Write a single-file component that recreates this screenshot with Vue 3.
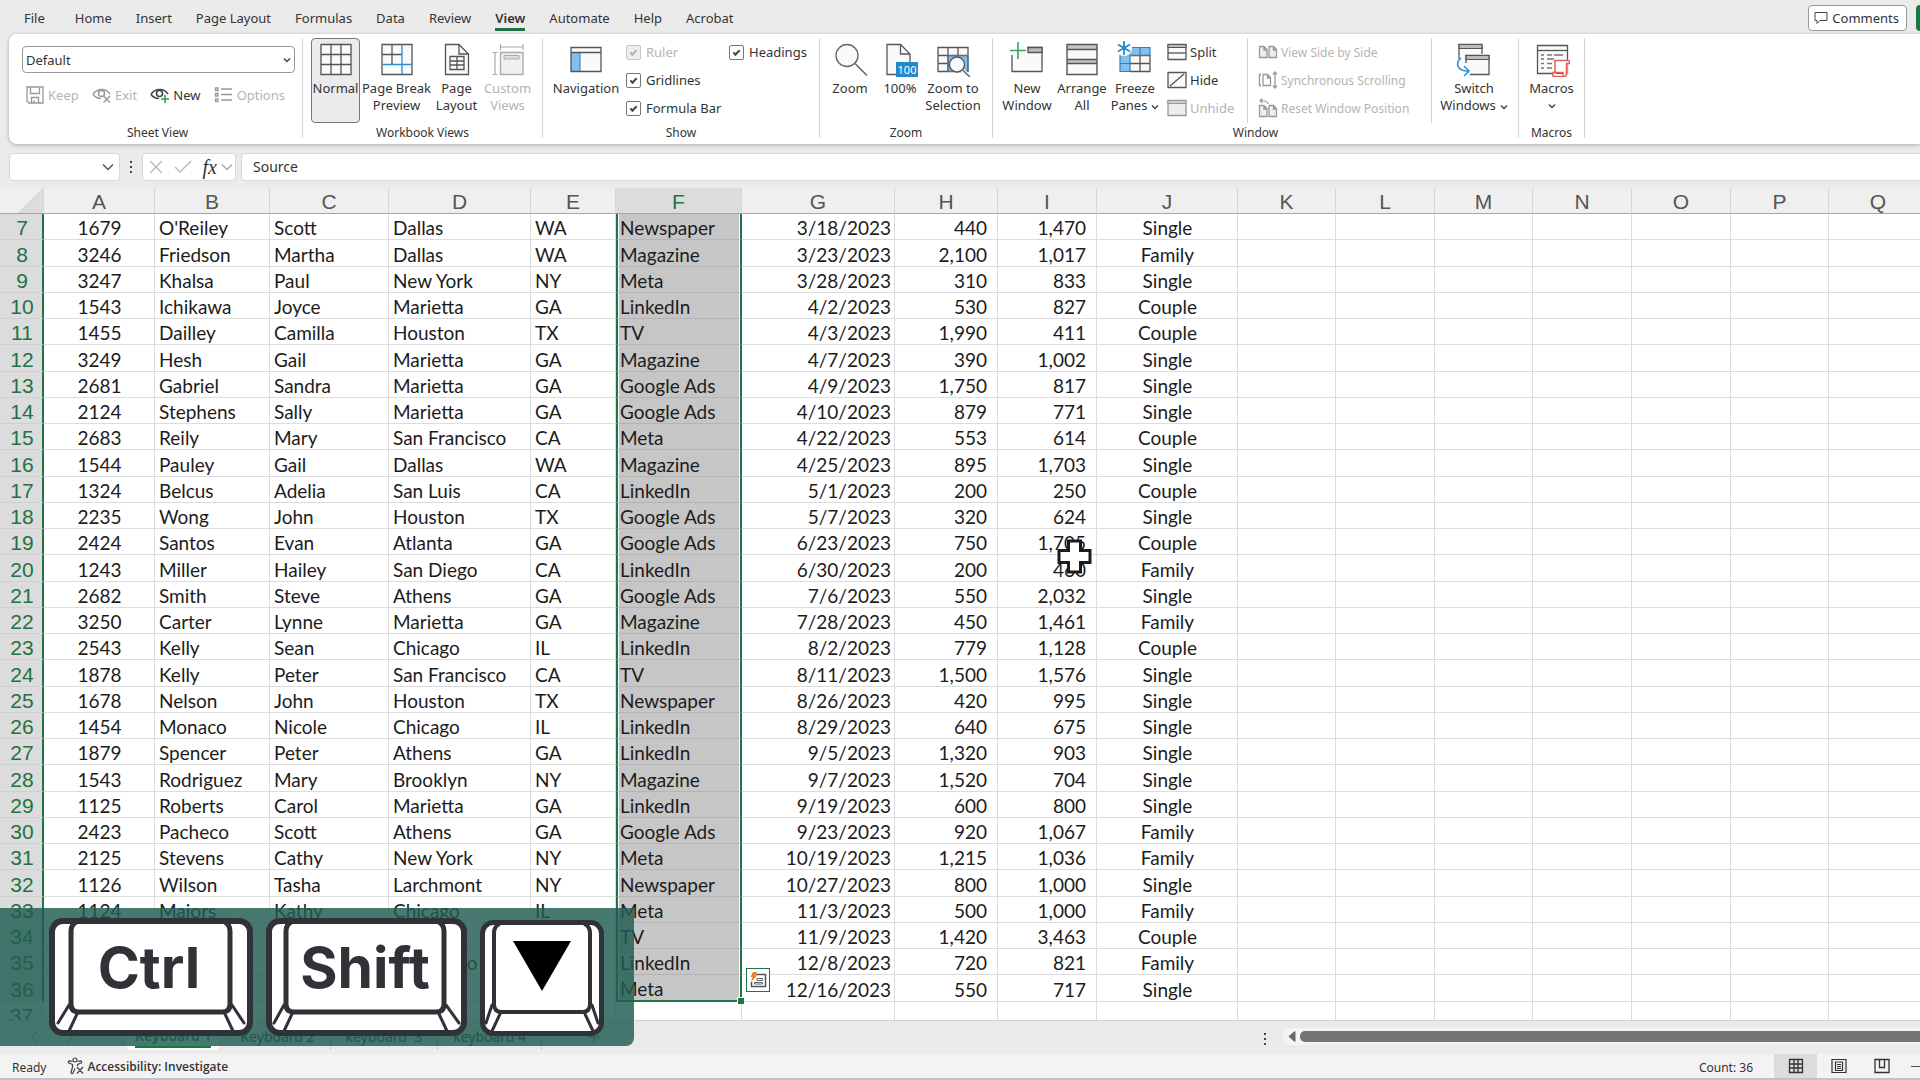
<template>
  <div class="excel">
    <nav class="menu">
      <button v-for="m in menus" :key="m" class="menu-item" :class="{ active: m === 'View' }">{{ m }}</button>
      <button class="comments">
        <svg width="14" height="14" viewBox="0 0 14 14"><path d="M1 1.500H13V9.500H6L3 12.500V9.500H1Z" fill="none" stroke="#444" /></svg>
        Comments
      </button>
      <button class="share" aria-label="Share"></button>
    </nav>

    <div class="ribbon">
      <section class="group sheet-view">
        <div class="body">
          <div class="view-select">
            <select aria-label="Sheet view"><option>Default</option></select>
            <svg class="chev" viewBox="0 0 8 6"><path :d="chevron" /></svg>
          </div>
          <div class="view-actions">
            <button v-for="a in viewActions" :key="a.label" class="small-btn" :disabled="a.off">
              <svg width="20" height="20" viewBox="0 0 20 20" v-html="icons[a.icon]" />{{ a.label }}
            </button>
          </div>
        </div>
        <h2>Sheet View</h2>
      </section>

      <section class="group workbook">
        <div class="body">
          <button v-for="b in workbookViews" :key="b.icon" class="big-btn" :class="[b.icon, { on: b.on }]" :disabled="b.off">
            <svg width="36" height="36" viewBox="0 0 36 36" v-html="icons[b.icon]" />
            <span v-for="l in b.lines" :key="l">{{ l }}</span>
          </button>
        </div>
        <h2>Workbook Views</h2>
      </section>

      <section class="group show">
        <div class="body">
          <button class="big-btn navigation">
            <svg width="36" height="36" viewBox="0 0 36 36" v-html="icons.navigation" />
            <span>Navigation</span>
          </button>
          <div class="checks">
            <label v-for="c in checks" :key="c.label" :class="{ off: c.off }">
              <input type="checkbox" checked :disabled="c.off" />{{ c.label }}
            </label>
          </div>
        </div>
        <h2>Show</h2>
      </section>

      <section class="group zoom-group">
        <div class="body">
          <button v-for="b in zooms" :key="b.icon" class="big-btn" :class="b.icon">
            <svg width="36" height="36" viewBox="0 0 36 36" v-html="icons[b.icon]" />
            <span v-for="l in b.lines" :key="l">{{ l }}</span>
          </button>
        </div>
        <h2>Zoom</h2>
      </section>

      <section class="group window-group">
        <div class="body">
          <button v-for="b in windows" :key="b.icon" class="big-btn" :class="b.icon">
            <svg width="36" height="36" viewBox="0 0 36 36" v-html="icons[b.icon]" />
            <span v-for="l in b.lines" :key="l">{{ l }}<svg v-if="l === 'Panes'" class="chev" viewBox="0 0 8 6"><path :d="chevron" /></svg></span>
          </button>
          <div class="stack first">
            <button v-for="s in windowSmall" :key="s.label" class="small-btn" :disabled="s.off">
              <svg width="20" height="20" viewBox="0 0 20 20" v-html="icons[s.icon]" />{{ s.label }}
            </button>
          </div>
          <div class="stack second">
            <button v-for="s in sideBySide" :key="s.label" class="small-btn" disabled>
              <svg width="20" height="20" viewBox="0 0 20 20" v-html="icons[s.icon]" />{{ s.label }}
            </button>
          </div>
          <button class="big-btn switch">
            <svg width="36" height="36" viewBox="0 0 36 36" v-html="icons.switch" />
            <span>Switch</span>
            <span>Windows<svg class="chev" viewBox="0 0 8 6"><path :d="chevron" /></svg></span>
          </button>
        </div>
        <h2>Window</h2>
      </section>

      <section class="group macros-group">
        <div class="body">
          <button class="big-btn macros">
            <svg width="36" height="36" viewBox="0 0 36 36" v-html="icons.macros" />
            <span>Macros</span>
            <svg class="chev" viewBox="0 0 8 6"><path :d="chevron" /></svg>
          </button>
        </div>
        <h2>Macros</h2>
      </section>
    </div>

    <div class="formula">
      <div class="name-box">
        <input type="text" aria-label="Name box" />
        <svg width="12" height="8" viewBox="0 0 12 8"><path d="M1 1.500L6 6.500L11 1.500" fill="none" stroke="#555" stroke-width="1.500" /></svg>
      </div>
      <svg class="dots" width="4" height="14" viewBox="0 0 4 14"><path d="M1 1h2v2h-2zM1 6h2v2h-2zM1 11h2v2h-2z" fill="#444" /></svg>
      <div class="fx">
        <button aria-label="Cancel"><svg width="16" height="16" viewBox="0 0 16 16"><path d="M2 2L14 14M14 2L2 14" fill="none" stroke="#bbb" stroke-width="1.500" /></svg></button>
        <button aria-label="Enter"><svg width="20" height="16" viewBox="0 0 20 16"><path d="M2 8L7 13L18 2" fill="none" stroke="#bbb" stroke-width="1.500" /></svg></button>
        <button class="fx-btn" aria-label="Insert function"><i>fx</i><svg width="12" height="8" viewBox="0 0 12 8"><path d="M1 1.500L6 6.500L11 1.500" fill="none" stroke="#aaa" stroke-width="1.500" /></svg></button>
      </div>
      <input class="formula-input" type="text" value="Source" aria-label="Formula bar" />
    </div>

    <main class="grid">
      <table :style="{ width: tableWidth + 'px' }">
        <colgroup>
          <col v-for="(w, i) in widths" :key="i" :style="{ width: w + 'px' }" />
        </colgroup>
        <thead>
          <tr>
            <th class="corner"></th>
            <th v-for="c in columns" :key="c" :class="{ sel: c === 'F' }">{{ c }}</th>
          </tr>
        </thead>
        <tbody>
          <tr v-for="(r, i) in rows" :key="i">
            <th :class="{ sel: i < 30 }">{{ i + 7 }}</th>
            <td v-for="(c, j) in columns" :key="c" :class="['c' + c, { sel: c === 'F' && i < 30, last: i === 29 }]">{{ r[j] }}</td>
          </tr>
        </tbody>
      </table>
      <button class="quick" aria-label="Quick analysis">
        <svg width="18" height="18" viewBox="0 0 18 18">
          <path d="M7 3.500H16.500V15.500H2.500V11" fill="none" stroke="#555" stroke-width="1.500" />
          <path d="M8 7.500H13.500V9.500H8ZM5.500 11.500H13.500V13H5.500Z" fill="#fff" stroke="#666" />
          <path d="M4 1H8L6 4.500H8L2 11L3.500 6H1.500Z" fill="#ed7d24" />
        </svg>
      </button>
      <svg class="cursor" width="36" height="36" viewBox="0 0 36 36">
        <path d="M13 4H25V13H34V25H25V34H13V25H4V13H13Z" fill="#0003" />
        <path d="M11.500 2H23.500V11.500H33V23.500H23.500V33H11.500V23.500H2V11.500H11.500Z" fill="#fff" stroke="#1c1c1c" stroke-width="3" />
      </svg>
    </main>

    <footer class="tabs">
      <button class="arrow" aria-label="Previous sheet"><svg width="8" height="12" viewBox="0 0 8 12"><path d="M6.500 1L1.500 6L6.500 11" fill="none" stroke="#777" /></svg></button>
      <button class="arrow" aria-label="Next sheet"><svg width="8" height="12" viewBox="0 0 8 12"><path d="M1.500 1L6.500 6L1.500 11" fill="none" stroke="#777" /></svg></button>
      <button v-for="(s, i) in sheets" :key="s" class="tab" :class="{ active: i === 0 }"><span>{{ s }}</span></button>
      <button class="add" aria-label="New sheet"><svg width="14" height="14" viewBox="0 0 14 14"><path d="M7 1V13M1 7H13" stroke="#555" /></svg></button>
      <svg class="dots" width="4" height="14" viewBox="0 0 4 14"><path d="M1 1h2v2h-2zM1 6h2v2h-2zM1 11h2v2h-2z" fill="#444" /></svg>
      <div class="scroll">
        <svg width="8" height="11" viewBox="0 0 8 11"><path d="M7.500 0V11L5 9.500L.5 5.500L5 1.500Z" fill="#666" /></svg>
        <div class="thumb"></div>
      </div>
    </footer>

    <div class="status">
      <span class="ready">Ready</span>
      <button class="access">
        <svg width="18" height="18" viewBox="0 0 18 18">
          <g fill="none" stroke="#444" stroke-width="1.200" stroke-linejoin="round">
            <circle cx="8" cy="3" r="2" />
            <path d="M5.500 4.500L2.500 3.800C1 3.800 1 5.500 2 6L5.500 7.500V10L4 15.500C4.200 17 5.700 17 6 16L8 11.500M10.500 4.500L13.500 3.800C15 3.800 15 5.500 14 6L10.500 7.500V9M10 10L16 16.500M16 10L10 16.500" />
          </g>
        </svg>
        Accessibility: Investigate
      </button>
      <span class="count">Count: 36</span>
      <button class="mode on" aria-label="Normal view"><svg width="16" height="16" viewBox="0 0 16 16"><path d="M1.500 1.500H14.500V14.500H1.500ZM6 1.500V14.500M10 1.500V14.500M1.500 6H14.500M1.500 10H14.500" fill="none" stroke="#333" stroke-width="1.300" /></svg></button>
      <button class="mode" aria-label="Page layout view"><svg width="16" height="16" viewBox="0 0 16 16"><path d="M1 1.500H15V14.500H1ZM4.500 4H11.500V12.500H4.500ZM6 6.500H10M6 8.500H10M6 10.500H10" fill="none" stroke="#333" stroke-width="1.200" /></svg></button>
      <button class="mode" aria-label="Page break view"><svg width="16" height="16" viewBox="0 0 16 16"><path d="M1 1.500H15V14.500H1ZM5.500 1.500V9.500H10.500V1.500" fill="none" stroke="#333" stroke-width="1.300" /></svg></button>
      <button class="minus" aria-label="Zoom out"></button>
    </div>

    <div class="keys">
      <svg v-for="k in keys" :key="k.id" :width="k.w" height="118" :viewBox="`0 0 ${k.w} 118`">
        <rect :x="k.s / 2" :y="k.top + k.s / 2" :width="k.w - k.s" :height="118 - k.top - k.s" rx="11" fill="#fff" stroke="#303238" :stroke-width="k.s" />
        <g fill="none" stroke="#303238" stroke-linecap="round">
          <path :d="`M${k.l + 5} ${k.top + 4}Q${k.l} ${k.top + 7} ${k.l} ${k.top + 13}V86Q${k.l} 94 ${k.l + 8} 94H${k.r - 8}Q${k.r} 94 ${k.r} 86V${k.top + 13}Q${k.r} ${k.top + 7} ${k.r - 5} ${k.top + 4}`" :stroke-width="k.s - 1" />
          <path :d="`M${k.l - 2} 87L${k.d} 105M${k.l + 6} 96L${k.l - 2} 113M${k.r + 2} 87L${k.w - k.d} 105M${k.r - 5} 96L${k.r + 3} 113`" stroke-width="3" />
        </g>
        <text v-if="k.text" :x="k.cx" y="70" text-anchor="middle">{{ k.text }}</text>
        <path v-else d="M33 23H91L62 73Z" fill="#000" />
      </svg>
    </div>
  </div>
</template>

<script setup>
const menus = ['File', 'Home', 'Insert', 'Page Layout', 'Formulas', 'Data', 'Review', 'View', 'Automate', 'Help', 'Acrobat']

const viewActions = [
  { label: 'Keep', icon: 'save', off: true },
  { label: 'Exit', icon: 'exit', off: true },
  { label: 'New', icon: 'eye' },
  { label: 'Options', icon: 'options', off: true },
]

const workbookViews = [
  { icon: 'normal', lines: ['Normal'], on: true },
  { icon: 'pagebreak', lines: ['Page Break', 'Preview'] },
  { icon: 'pagelayout', lines: ['Page', 'Layout'] },
  { icon: 'custom', lines: ['Custom', 'Views'], off: true },
]

const checks = [
  { label: 'Ruler', off: true },
  { label: 'Headings' },
  { label: 'Gridlines' },
  { label: 'Formula Bar' },
]

const zooms = [
  { icon: 'zoom', lines: ['Zoom'] },
  { icon: 'hundred', lines: ['100%'] },
  { icon: 'zoomsel', lines: ['Zoom to', 'Selection'] },
]

const windows = [
  { icon: 'newwin', lines: ['New', 'Window'] },
  { icon: 'arrange', lines: ['Arrange', 'All'] },
  { icon: 'freeze', lines: ['Freeze', 'Panes'] },
]

const windowSmall = [
  { label: 'Split', icon: 'split' },
  { label: 'Hide', icon: 'hide' },
  { label: 'Unhide', icon: 'unhide', off: true },
]

const sideBySide = [
  { label: 'View Side by Side', icon: 'side' },
  { label: 'Synchronous Scrolling', icon: 'sync' },
  { label: 'Reset Window Position', icon: 'reset' },
]

const sheets = ['Keyboard 1', 'Keyboard 2', 'keyboard  3', 'keyboard 4']

const keys = [
  { id: 'ctrl', text: 'Ctrl', w: 204, s: 6, top: 0, l: 22, r: 181, d: 9, cx: 100 },
  { id: 'shift', text: 'Shift', w: 201, s: 6, top: 0, l: 20, r: 178, d: 8, cx: 99 },
  { id: 'down', text: '', w: 124, s: 5, top: 2, l: 14, r: 110, d: 6, cx: 62 },
]

const chevron = 'M1 1.500L4 4.500L7 1.500'

const icons = {
  save: '<g fill="none" stroke="#999" stroke-width="1.300"><path d="M2 2H18V18H4L2 16ZM5.500 2V8.500H14.500V2M6.500 18V12.500H13.500V18M9 15V18"/></g>',
  exit: '<g fill="none" stroke="#999" stroke-width="1.500"><path d="M1 9.500C5 3 14 3 18 9M1 9.500C3 12 6 13.500 9 13.500"/><circle cx="9.500" cy="8.500" r="3"/><path d="M11.500 11L18 17.500M18 11L11.500 17.500"/></g>',
  eye: '<g fill="none" stroke="#444" stroke-width="1.600"><path d="M1 9.500C5 3 14 3 18 9M1 9.500C3 12 6 13.500 9 13.500"/><circle cx="9.500" cy="8.500" r="3"/><path d="M15 10V18M11 14H19" stroke="#2e9e4f"/></g>',
  options: '<g fill="none" stroke="#999" stroke-width="1.300"><path d="M7 4H18M7 9.500H18M7 15H18"/><path d="M1.500 3H4V5.500H1.500ZM1.500 8.500H4V11H1.500ZM1.500 14H4V16.500H1.500Z"/></g>',
  normal: '<path d="M3 3.500H33V33.500H3ZM13 3.500V33.500M23 3.500V33.500M3 13.500H33M3 23.500H33" fill="#fafafa" stroke="#555" stroke-width="1.300"/>',
  pagebreak: '<path d="M3 3.500H33V33.500H3ZM13 3.500V23.500M3 13.500H23" fill="#fafafa" stroke="#555" stroke-width="1.300"/><path d="M23 4V33M3.500 23.500H32.500" stroke="#2b8fd0" stroke-width="1.300"/>',
  pagelayout: '<path d="M6.500 3.500H20L29.500 13V33.500H6.500Z" fill="#fafafa" stroke="#555" stroke-width="1.300"/><path d="M20 3.500V13H29.500M11 15.500H25V28.500H11ZM11 20H25M11 24H25M18 15.500V28.500" fill="none" stroke="#555" stroke-width="1.300"/>',
  custom: '<path d="M10.500 11.500H33V33.500H10.500Z" fill="#f0f0f0" stroke="#aaa" stroke-width="1.300"/><path d="M14 14.500H29V18H14Z" fill="#ddd" stroke="#aaa"/><path d="M10.500 6H33M10.500 3V9M33 3V9M5 11.500V33.500M2.500 11.500H7.500M2.500 33.500H7.500" stroke="#aaa" stroke-width="1.200"/>',
  navigation: '<path d="M3 6.500H33V30.500H3Z" fill="#fafafa"/><path d="M3 11.500H12V30.500H3Z" fill="#83beec"/><path d="M12 11.500V30.500" stroke="#2b7fc4"/><path d="M3 6.500H33V30.500H3ZM3 11.500H33" fill="none" stroke="#555" stroke-width="1.300"/>',
  zoom: '<circle cx="15" cy="14.500" r="11" fill="#fafafa" stroke="#666" stroke-width="1.300"/><path d="M23 22.500L35 34.500" stroke="#666" stroke-width="1.600"/>',
  hundred: '<path d="M5 3.500H18.500L28 13V33.500H5Z" fill="#fafafa" stroke="#555" stroke-width="1.300"/><path d="M18.500 3.500V13H28" fill="none" stroke="#555" stroke-width="1.300"/><path d="M14 21H36V36H14Z" fill="#2488cc"/><text x="25" y="33" text-anchor="middle" fill="#fff" font-size="11" font-family="Noto Sans, sans-serif">100</text>',
  zoomsel: '<path d="M3 6.500H33V30.500H3Z" fill="#fafafa"/><path d="M13 14.500H33V30.500H13Z" fill="#83beec"/><path d="M3 6.500H33V30.500H3ZM13 6.500V30.500M23 6.500V14.500M3 14.500H33M3 22.500H13" fill="none" stroke="#555" stroke-width="1.300"/><path d="M13 14.500H33V30.500H13Z" fill="none" stroke="#2b7fc4"/><path d="M27 29L35 36" stroke="#fff" stroke-width="4"/><circle cx="22" cy="23.500" r="7.500" fill="#fafafa" stroke="#555" stroke-width="1.300"/><path d="M27.500 29L35 36" stroke="#666" stroke-width="1.600"/>',
  newwin: '<path d="M3 14V30.500H33V6.500H18" fill="#fafafa" stroke="#555" stroke-width="1.300"/><path d="M19 6.500H33V11.500H19Z" fill="#bbb" stroke="#555" stroke-width="1.300"/><path d="M9 1V18M1 9.500H17" stroke="#3aa75d" stroke-width="1.600"/>',
  arrange: '<path d="M3 3.500H33V33.500H3Z" fill="#fafafa"/><path d="M3 3.500H33V8.500H3ZM3 18.500H33V22.500H3Z" fill="#c4c4c4"/><path d="M3 3.500H33V33.500H3ZM3 8.500H33M3 18.500H33M3 22.500H33" fill="none" stroke="#555" stroke-width="1.400"/>',
  freeze: '<path d="M3 6.500H33V30.500H3Z" fill="#fafafa"/><path d="M3 6.500H33V14.500H13V30.500H3Z" fill="#83beec"/><path d="M13 14.500H33V30.500H13M23 14.500V30.500M13 22.500H33" fill="none" stroke="#555" stroke-width="1.300"/><path d="M3 14V30.500H13V14.500H33V6.500H12M23 6.500V14.500M3 22.500H13" fill="none" stroke="#2b7fc4" stroke-width="1.200"/><circle cx="7" cy="7" r="8" fill="#fff"/><path d="M7 0V14M1 3.500L13 10.500M13 3.500L1 10.500" stroke="#2488cc" stroke-width="1.800"/>',
  switch: '<path d="M3 18V3.500H26V13" fill="#fafafa" stroke="#555" stroke-width="1.300"/><path d="M3 3.500H26V7.500H3Z" fill="#bbb" stroke="#555" stroke-width="1.200"/><path d="M10 14.500H33V33.500H10Z" fill="#fafafa"/><path d="M14 33.500H33V14.500H10V22" fill="none" stroke="#555" stroke-width="1.300"/><path d="M10 14.500H33V18.500H10Z" fill="#bbb" stroke="#555" stroke-width="1.200"/><path d="M5 17C-1 22 1 30 12 30M8 25L13 30L8 35" fill="none" stroke="#2b8fd8" stroke-width="1.500"/>',
  macros: '<path d="M3.500 4.500H33.500V32.500H3.500Z" fill="#fafafa" stroke="#555" stroke-width="1.300"/><path d="M3.500 9.500H33.500" stroke="#555" stroke-width="1.300"/><path d="M7 14H10M13 14H18M20 14H29M7 18H10M13 18H20M7 22.500H10M13 22.500H18M7 27H10M13 27H18" stroke="#777" stroke-width="1.300"/><path d="M21 19.500H33.500V33H19V36H30C32 36 33 34 32 22H35.500V19H33" fill="#fff"/><path d="M21 19.500V31.500H19V35.500H31Q32.500 35 32.500 32V22.500H35.500V20.500Q35 19.500 34 19.500ZM19 31.500H29V35" fill="#fff" stroke="#e8605a" stroke-width="1.500"/>',
  split: '<path d="M1 2.500H19V17.500H1Z" fill="#fafafa" stroke="#555" stroke-width="1.300"/><path d="M1 2.500H19V5.500H1Z" fill="#bbb" stroke="#555"/><path d="M1 11H19" stroke="#555" stroke-width="1.300"/>',
  hide: '<path d="M1 2.500H19V17.500H1ZM3 16L17 4" fill="#fafafa" stroke="#555" stroke-width="1.300"/>',
  unhide: '<path d="M1 2.500H19V17.500H1Z" fill="#eee" stroke="#999" stroke-width="1.300"/><path d="M1 2.500H19V5.500H1Z" fill="#ccc" stroke="#999"/>',
  side: '<path d="M1.500 4.500H6L9 7.500V15.500H1.500ZM6 4.500V8H9M11 4.500H15.500L18.500 7.500V15.500H11ZM15.500 4.500V8H18.500" fill="#eee" stroke="#999" stroke-width="1.300"/>',
  sync: '<path d="M5 4.500H9.500L12.500 7.500V15.500H5ZM9.500 4.500V8H12.500M3 4.500H1.500V15.500H3M17 2V18M15 4.500L17 2L19 4.500M15 15.500L17 18L19 15.500" fill="none" stroke="#999" stroke-width="1.300"/>',
  reset: '<path d="M1.500 7.500H6L9 10.500V18.500H1.500ZM6 7.500V11H9M11 7.500H15.500L18.500 10.500V18.500H11ZM15.500 7.500V11H18.500" fill="#eee" stroke="#999" stroke-width="1.300"/><path d="M10 6C10 3 7 2.500 2 2.500M4.500 .5L2 2.500L4.500 5" fill="none" stroke="#999" stroke-width="1.200"/>',
}

const columns = 'ABCDEFGHIJKLMNOPQ'.split('')
const widths = [44, 111, 115, 119, 142, 85, 126, 153, 103, 99, 141, 98, 99, 98, 99, 99, 98, 99]
const tableWidth = widths.reduce((a, b) => a + b, 0)

const rows = `1679|O'Reiley|Scott|Dallas|WA|Newspaper|3/18/2023|440|1,470|Single
3246|Friedson|Martha|Dallas|WA|Magazine|3/23/2023|2,100|1,017|Family
3247|Khalsa|Paul|New York|NY|Meta|3/28/2023|310|833|Single
1543|Ichikawa|Joyce|Marietta|GA|LinkedIn|4/2/2023|530|827|Couple
1455|Dailley|Camilla|Houston|TX|TV|4/3/2023|1,990|411|Couple
3249|Hesh|Gail|Marietta|GA|Magazine|4/7/2023|390|1,002|Single
2681|Gabriel|Sandra|Marietta|GA|Google Ads|4/9/2023|1,750|817|Single
2124|Stephens|Sally|Marietta|GA|Google Ads|4/10/2023|879|771|Single
2683|Reily|Mary|San Francisco|CA|Meta|4/22/2023|553|614|Couple
1544|Pauley|Gail|Dallas|WA|Magazine|4/25/2023|895|1,703|Single
1324|Belcus|Adelia|San Luis|CA|LinkedIn|5/1/2023|200|250|Couple
2235|Wong|John|Houston|TX|Google Ads|5/7/2023|320|624|Single
2424|Santos|Evan|Atlanta|GA|Google Ads|6/23/2023|750|1,705|Couple
1243|Miller|Hailey|San Diego|CA|LinkedIn|6/30/2023|200|460|Family
2682|Smith|Steve|Athens|GA|Google Ads|7/6/2023|550|2,032|Single
3250|Carter|Lynne|Marietta|GA|Magazine|7/28/2023|450|1,461|Family
2543|Kelly|Sean|Chicago|IL|LinkedIn|8/2/2023|779|1,128|Couple
1878|Kelly|Peter|San Francisco|CA|TV|8/11/2023|1,500|1,576|Single
1678|Nelson|John|Houston|TX|Newspaper|8/26/2023|420|995|Single
1454|Monaco|Nicole|Chicago|IL|LinkedIn|8/29/2023|640|675|Single
1879|Spencer|Peter|Athens|GA|LinkedIn|9/5/2023|1,320|903|Single
1543|Rodriguez|Mary|Brooklyn|NY|Magazine|9/7/2023|1,520|704|Single
1125|Roberts|Carol|Marietta|GA|LinkedIn|9/19/2023|600|800|Single
2423|Pacheco|Scott|Athens|GA|Google Ads|9/23/2023|920|1,067|Family
2125|Stevens|Cathy|New York|NY|Meta|10/19/2023|1,215|1,036|Family
1126|Wilson|Tasha|Larchmont|NY|Newspaper|10/27/2023|800|1,000|Single
1124|Majors|Kathy|Chicago|IL|Meta|11/3/2023|500|1,000|Family
|||||TV|11/9/2023|1,420|3,463|Couple
|||San Diego||LinkedIn|12/8/2023|720|821|Family
|||||Meta|12/16/2023|550|717|Single
`.split('\n').map((line) => line.split('|'))
</script>

<style>
body {
  margin: 0;
  overflow: hidden;
}
</style>

<style scoped>
.excel {
  position: relative;
  display: flex;
  flex-direction: column;
  height: 100vh;
  overflow: hidden;
  background: #ebebeb;
  color: #333;
  font-family: 'Noto Sans', sans-serif;
  font-size: 13px;
}
.excel * { box-sizing: border-box; }
svg { flex: none; display: block; }
button {
  padding: 0;
  border: 0;
  background: none;
  color: inherit;
  font: inherit;
  white-space: nowrap;
}
button:disabled { color: #b4b4b4; }

/* menu */
.menu {
  display: flex;
  flex: none;
  align-items: center;
  gap: 24px;
  height: 34px;
  padding: 2px 0 0 24px;
}
.menu-item {
  height: 26px;
  border-top: 3px solid transparent;
  border-bottom: 3px solid transparent;
}
.menu-item:first-child { margin-right: 6px; }
.menu-item.active {
  border-bottom-color: #1e7145;
  font-weight: 600;
}
.comments {
  display: flex;
  align-items: center;
  gap: 4px;
  height: 26px;
  margin-left: auto;
  padding: 0 7px 0 5px;
  border: 1px solid #999;
  border-radius: 4px;
  background: #fff;
}
.share {
  width: 4px;
  height: 26px;
  margin-left: -15px;
  border-radius: 4px 0 0 4px;
  background: #107c41;
}

/* ribbon */
.ribbon {
  display: flex;
  flex: none;
  height: 110px;
  margin-left: 9px;
  padding: 4px 0 6px;
  border-radius: 8px 0 0 8px;
  background: #fff;
  box-shadow: 0 1px 4px #0004;
}
.group {
  display: flex;
  flex-direction: column;
  border-right: 1px solid #d4d4d4;
}
.group h2 {
  margin: 0;
  font-size: 12px;
  font-weight: 400;
  line-height: 20px;
  text-align: center;
}
.body {
  display: flex;
  flex: none;
  height: 85px;
}
.big-btn {
  display: flex;
  flex-direction: column;
  align-items: center;
  height: 85px;
  padding-top: 3px;
  line-height: 17px;
}
.big-btn > svg:first-child { margin-bottom: 3px; }
.big-btn.on {
  padding-top: 2px;
  border: 1px solid #777;
  border-radius: 4px;
  background: #ebebeb;
}
.chev {
  display: inline-block;
  width: 8px;
  height: 6px;
  margin-left: 4px;
  fill: none;
  stroke: #444;
  stroke-width: 1.5;
  vertical-align: middle;
}
.small-btn {
  display: flex;
  align-items: center;
  gap: 3px;
  height: 28px;
}

.sheet-view { width: 294px; }
.sheet-view h2 { padding-left: 4px; }
.sheet-view .body {
  flex-direction: column;
  padding: 8px 8px 0 13px;
}
.view-select {
  display: flex;
  align-items: center;
  margin-right: -1px;
}
.view-select select {
  flex: 1;
  height: 27px;
  padding: 0 3px;
  border: 1px solid #999;
  border-radius: 4px;
  appearance: none;
  background: #fff;
  color: #333;
  font: inherit;
}
.view-select .chev { margin-left: -12px; margin-right: 4px; }
.view-actions {
  display: flex;
  justify-content: space-between;
  padding: 8px 9px 0 3px;
}

.workbook .body { gap: 3px; padding: 0 10px 0 8px; }
.normal { width: 49px; }
.pagebreak { width: 67px; }
.pagelayout { width: 47px; }
.custom { width: 49px; }

.show { width: 277px; }
.show .body { gap: 7px; padding-left: 10px; }
.navigation { width: 66px; }
.checks {
  display: grid;
  grid-template-columns: 103px auto;
  grid-auto-rows: 28px;
  align-content: start;
}
.checks label {
  display: flex;
  align-items: center;
  gap: 5px;
  white-space: nowrap;
}
.checks label:nth-child(3),
.checks label:nth-child(4) { grid-column: 1; }
.checks .off { color: #b4b4b4; }
.checks input {
  display: flex;
  align-items: center;
  justify-content: center;
  width: 15px;
  height: 15px;
  margin: 0;
  border: 1px solid #777;
  border-radius: 2px;
  appearance: none;
  background: #fff;
}
.checks input::after {
  width: 7px;
  height: 4px;
  border: solid #444;
  border-width: 0 0 2px 2px;
  content: '';
  box-sizing: border-box;
  transform: rotate(-45deg);
}
.checks input:disabled { border-color: #c4c4c4; background: #eee; }
.checks input:disabled::after { border-color: #b0b0b0; }

.zoom-group .body { gap: 4px; padding: 0 13px 0 7px; }
.zoom, .hundred { width: 46px; }
.zoomsel { width: 52px; }

.window-group { width: 526px; }
.window-group .body { gap: 4px; padding-left: 8px; }
.newwin { width: 52px; }
.arrange { width: 50px; }
.freeze { width: 48px; }
.stack {
  display: grid;
  grid-auto-rows: 28px;
  align-content: start;
}
.stack.first { width: 76px; margin-left: 4px; }
.stack.second {
  width: 185px;
  padding-left: 10px;
  border: solid #d4d4d4;
  border-width: 0 1px;
}
.stack.second .small-btn { font-size: 12px; }
.switch { width: 70px; margin-left: 3px; }
.macros-group { width: 66px; align-items: stretch; }
.macros-group .body { justify-content: center; }
.macros .chev { margin: 6px 0 0; }

/* formula bar */
.formula {
  display: flex;
  flex: none;
  align-items: center;
  height: 28px;
  margin: 9px 0 7px 9px;
}
.formula input {
  min-width: 0;
  border: 0;
  background: none;
  color: #333;
  font: inherit;
  outline: 0;
}
.name-box, .fx {
  display: flex;
  align-items: center;
  height: 28px;
  border: 1px solid #d8d8d8;
  border-radius: 4px;
  background: #fff;
}
.name-box { width: 111px; padding-right: 5px; }
.name-box input { flex: 1; }
.formula .dots { margin: 0 9px; }
.fx {
  justify-content: space-between;
  width: 94px;
  padding: 0 2px 0 5px;
}
.fx-btn {
  display: flex;
  align-items: center;
  gap: 4px;
}
.fx-btn i {
  font-family: 'Liberation Serif', serif;
  font-size: 20px;
  line-height: 20px;
}
.formula .formula-input {
  flex: 1;
  height: 28px;
  margin-left: 5px;
  padding: 0 11px 2px;
  border: 1px solid #d8d8d8;
  border-right: 0;
  border-radius: 4px 0 0 4px;
  background: #fff;
  font-size: 14px;
}

/* sheet */
.grid {
  position: relative;
  flex: 1;
  min-height: 0;
  overflow: hidden;
  background: #fff;
}
table {
  border-spacing: 0;
  table-layout: fixed;
}
th, td {
  height: 26px;
  padding: 2px 0 0;
  overflow: hidden;
  line-height: 23px;
  white-space: pre;
}
tbody tr:nth-child(4n + 2) > * { height: 27px; }
th {
  border-right: 1px solid #d6d6d6;
  background: #efefef;
  color: #555;
  font-family: 'Liberation Sans', sans-serif;
  font-size: 21px;
  font-weight: 400;
}
thead th { border-bottom: 1px solid #a6a6a6; }
th.sel { background: #dcdcdc; color: #217346; }
tbody th { border-bottom: 1px solid #d0d0d0; }
tbody th.sel { padding-left: 2px; border-right: 2px solid #217346; }
.corner { background: linear-gradient(135deg, #efefef 62%, #dcdcdc 62%); }
td {
  padding: 2px 3px 0 4px;
  border: solid #dcdcdc;
  border-width: 0 1px 1px 0;
  color: #1c1c1c;
  font-family: Lato, sans-serif;
  font-size: 19px;
}
.cA, .cJ { text-align: center; }
.cG { text-align: right; }
.cH, .cI { padding-right: 10px; text-align: right; }
td.sel {
  position: relative;
  padding-left: 2px;
  border-right: 2px solid #217346;
  border-left: 2px solid #217346;
  border-bottom-color: #b4b4b4;
  background: #c6c6c6;
  box-shadow: inset -1px 0 #fff, inset 1px 0 #fff;
}
td.sel.last {
  overflow: visible;
  border-bottom: 2px solid #217346;
  line-height: 22px;
}
td.sel.last::after {
  position: absolute;
  right: -4px;
  bottom: -4px;
  width: 6px;
  height: 6px;
  border: solid #fff;
  border-width: 1px 0 0 1px;
  background: #217346;
  content: '';
}
.quick {
  position: absolute;
  top: 780px;
  left: 746px;
  display: flex;
  align-items: center;
  justify-content: center;
  width: 24px;
  height: 24px;
  border: 1px solid #217346;
  background: #fff;
}
.cursor {
  position: absolute;
  top: 351px;
  left: 1057px;
}

/* sheet tabs */
.tabs {
  display: flex;
  flex: none;
  height: 34px;
  border-top: 1px solid #d4d4d4;
}
.arrow { width: 36px; height: 32px; padding-left: 30px; }
.arrow + .arrow { margin-right: 55px; }
.tab {
  height: 29px;
  padding: 5px 15px 2px;
  border-right: 1px solid #ccc;
  font-size: 14px;
  line-height: 20px;
  white-space: pre;
}
.tab.active {
  padding: 5px 8px 2px;
  margin-right: 6px;
  border: 0;
  border-radius: 0 0 4px 4px;
  background: #fff;
  color: #217346;
  font-weight: 600;
}
.tab.active span {
  display: block;
  border-bottom: 2px solid #107c41;
}
.add { width: 104px; height: 32px; padding-left: 45px; }
.tabs .dots { margin: 11px 16px 0 auto; }
.scroll {
  display: flex;
  align-items: center;
  gap: 4px;
  width: calc(33% + 3px);
  height: 17px;
  margin: 7px 0 0;
  padding-left: 5px;
  border-radius: 8px 0 0 8px;
  background: #f4f4f4;
}
.thumb {
  flex: 1;
  height: 11px;
  border-radius: 5px 0 0 5px;
  background: #757575;
}

/* status bar */
.status {
  display: flex;
  flex: none;
  align-items: center;
  height: 26px;
  border-bottom: 2px solid #b9c4d4;
  background: #f3f3f3;
  font-size: 12px;
}
.ready { margin: 2px 21px 0 12px; }
.access {
  display: flex;
  align-items: center;
  gap: 2px;
  font-family: 'Open Sans', sans-serif;
  font-weight: 600;
}
.count { margin: 2px 21px 0 auto; }
.mode {
  display: flex;
  align-items: center;
  justify-content: center;
  width: 43px;
  height: 24px;
}
.mode.on { background: #dcdcdc; }
.minus {
  width: 9px;
  height: 1px;
  margin-left: 8px;
  background: #555;
}

/* pressed keys overlay */
.keys {
  position: absolute;
  bottom: 34px;
  left: 0;
  display: flex;
  gap: 13px;
  padding: 10px 30px 10px 49px;
  border-radius: 0 0 8px 0;
  background: rgba(32, 92, 80, 0.82);
}
.keys text {
  fill: #303238;
  font-family: Inter, sans-serif;
  font-size: 57px;
  font-weight: 700;
}
</style>
